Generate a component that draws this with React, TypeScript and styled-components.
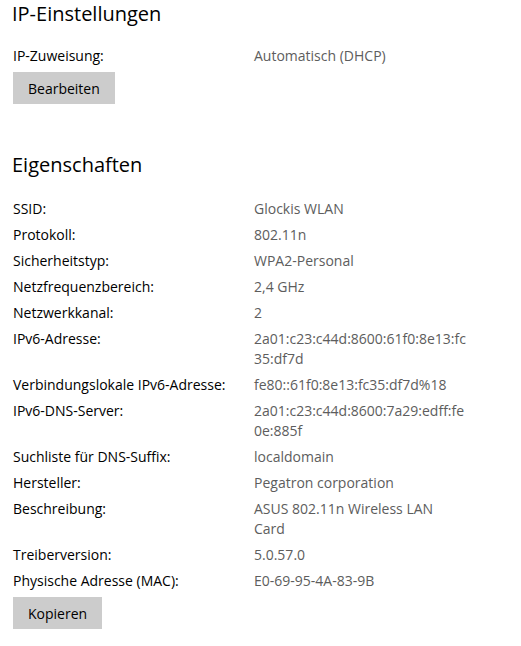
import styled, { createGlobalStyle } from 'styled-components';

const GlobalStyle = createGlobalStyle`
  html, body {
    margin: 0;
    padding: 0;
    background: #ffffff;
  }
  body {
    font-family: "Open Sans", "Noto Sans", sans-serif;
    color: #000000;
  }
`;

const Page = styled.div`
  display: flex;
  flex-direction: column;
  padding: 0 0 0 12px;
  width: 521px;
  box-sizing: border-box;
`;

const Section = styled.section<{ $top?: number; $gap: number }>`
  display: flex;
  flex-direction: column;
  margin-top: ${(p) => p.$top ?? 0}px;

  & > h2 {
    margin-bottom: ${(p) => p.$gap}px;
  }
`;

const Heading = styled.h2`
  margin: 0;
  font-size: 20px;
  line-height: 28px;
  font-weight: 400;
  color: #000000;
`;

const List = styled.div`
  display: flex;
  flex-direction: column;
  gap: 6px;
  padding-left: 1px;
`;

const Row = styled.div`
  display: grid;
  grid-template-columns: 241px 212px;
  font-size: 14px;
  line-height: 20px;
`;

const Label = styled.span`
  color: #000000;
`;

const Value = styled.span`
  color: #5d5d5d;
  overflow-wrap: anywhere;
`;

const Button = styled.button`
  align-self: flex-start;
  height: 32px;
  padding: 0 15px;
  border: none;
  background: #cccccc;
  color: #000000;
  font-family: inherit;
  font-size: 14px;
  cursor: pointer;
`;

type Prop = { label: string; value: string };

const ipProps: Prop[] = [{ label: 'IP-Zuweisung:', value: 'Automatisch (DHCP)' }];

const properties: Prop[] = [
  { label: 'SSID:', value: 'Glockis WLAN' },
  { label: 'Protokoll:', value: '802.11n' },
  { label: 'Sicherheitstyp:', value: 'WPA2-Personal' },
  { label: 'Netzfrequenzbereich:', value: '2,4 GHz' },
  { label: 'Netzwerkkanal:', value: '2' },
  { label: 'IPv6-Adresse:', value: '2a01:c23:c44d:8600:61f0:8e13:fc35:df7d' },
  { label: 'Verbindungslokale IPv6-Adresse:', value: 'fe80::61f0:8e13:fc35:df7d%18' },
  { label: 'IPv6-DNS-Server:', value: '2a01:c23:c44d:8600:7a29:edff:fe0e:885f' },
  { label: 'Suchliste für DNS-Suffix:', value: 'localdomain' },
  { label: 'Hersteller:', value: 'Pegatron corporation' },
  { label: 'Beschreibung:', value: 'ASUS 802.11n Wireless LAN Card' },
  { label: 'Treiberversion:', value: '5.0.57.0' },
  { label: 'Physische Adresse (MAC):', value: 'E0-69-95-4A-83-9B' },
];

const PropRows = ({ items }: { items: Prop[] }) => (
  <>
    {items.map((p) => (
      <Row key={p.label}>
        <Label>{p.label}</Label>
        <Value>{p.value}</Value>
      </Row>
    ))}
  </>
);

export default function App() {
  return (
    <>
      <GlobalStyle />
      <Page>
        <Section $gap={18}>
          <Heading>IP-Einstellungen</Heading>
          <List>
            <PropRows items={ipProps} />
            <Button>Bearbeiten</Button>
          </List>
        </Section>
        <Section $top={47} $gap={20}>
          <Heading>Eigenschaften</Heading>
          <List>
            <PropRows items={properties} />
            <Button>Kopieren</Button>
          </List>
        </Section>
      </Page>
    </>
  );
}
